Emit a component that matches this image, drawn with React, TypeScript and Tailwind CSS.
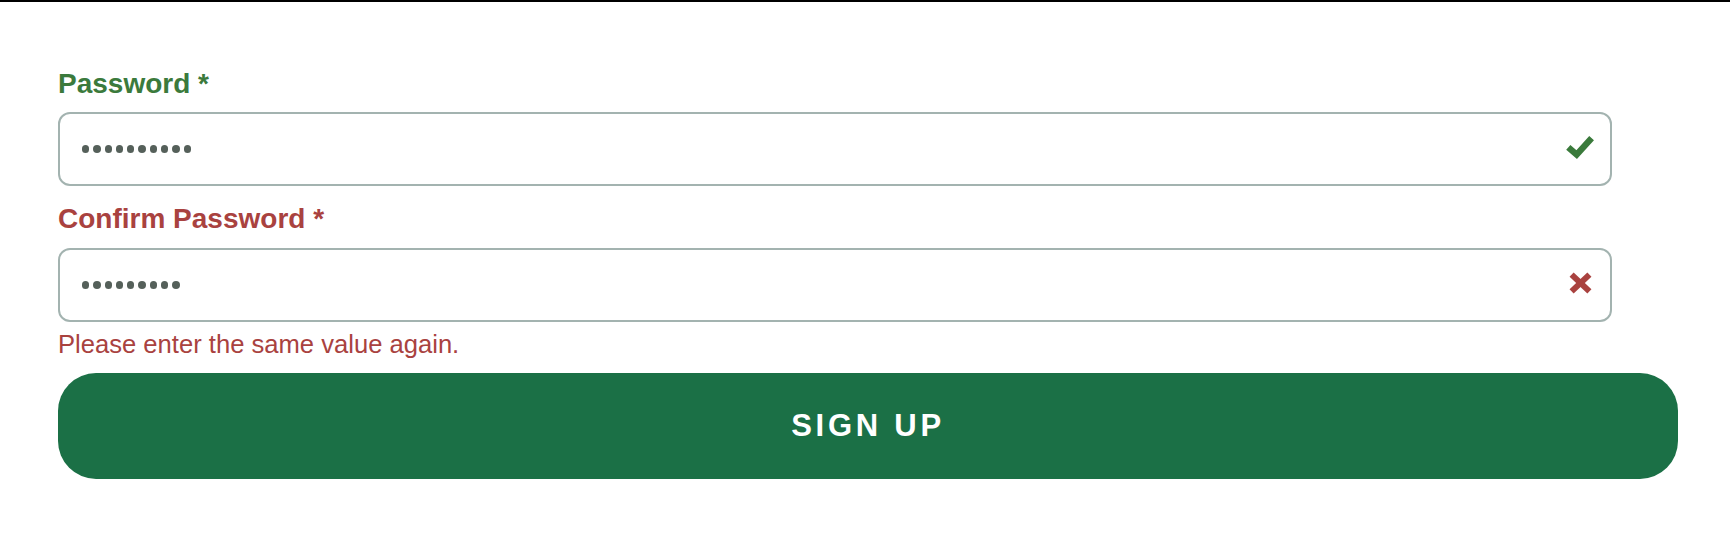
const font = { fontFamily: '"Liberation Sans", Arial, sans-serif' };

function Dots({ count }: { count: number }) {
  return (
    <div className="flex items-center gap-[4px]">
      {Array.from({ length: count }).map((_, i) => (
        <span key={i} className="block w-[7.3px] h-[7.3px] rounded-full bg-[#55605a]" />
      ))}
    </div>
  );
}

function CheckIcon() {
  return (
    <svg width="28" height="24" viewBox="0 0 28 24" className="overflow-visible">
      <polyline
        points="2.3,12.3 10.7,19.6 25.6,3.2"
        fill="none"
        stroke="#3a7a3b"
        strokeWidth="6.4"
        strokeLinecap="butt"
        strokeLinejoin="miter"
      />
    </svg>
  );
}

function CrossIcon() {
  return (
    <svg width="23" height="22" viewBox="0 0 23 22" className="overflow-visible">
      <g stroke="#a9423f" strokeWidth="6" strokeLinecap="butt" fill="none">
        <line x1="2.6" y1="2.6" x2="20.4" y2="19.4" />
        <line x1="20.4" y1="2.6" x2="2.6" y2="19.4" />
      </g>
    </svg>
  );
}

function PasswordField({ dots, valid }: { dots: number; valid: boolean }) {
  return (
    <div className="flex items-center justify-between w-[1554px] h-[74px] border-2 border-[#a3b3b0] rounded-[12px] bg-white pl-[22px] pr-[16px]">
      <Dots count={dots} />
      <div className="flex items-center justify-center w-[28px] mb-[5px]">
        {valid ? <CheckIcon /> : <CrossIcon />}
      </div>
    </div>
  );
}

export default function App() {
  return (
    <div className="min-h-screen bg-white border-t-2 border-black" style={font}>
      <div className="flex flex-col pl-[58px] pt-[68px]">
        <label className="text-[28px] leading-[28px] font-bold text-[#3b7a3c]">Password *</label>
        <div className="mt-[14px]">
          <PasswordField dots={10} valid />
        </div>
        <label className="mt-[19px] text-[28px] leading-[28px] font-bold text-[#a9423f]">
          Confirm Password *
        </label>
        <div className="mt-[15px]">
          <PasswordField dots={9} valid={false} />
        </div>
        <p className="mt-[9px] text-[25.6px] leading-[26px] text-[#a9423f]">
          Please enter the same value again.
        </p>
        <button className="mt-[16px] w-[1620px] h-[106px] rounded-[38px] bg-[#1b7046] text-white text-[31px] font-bold tracking-[3.75px] flex items-center justify-center">
          SIGN UP
        </button>
      </div>
    </div>
  );
}
